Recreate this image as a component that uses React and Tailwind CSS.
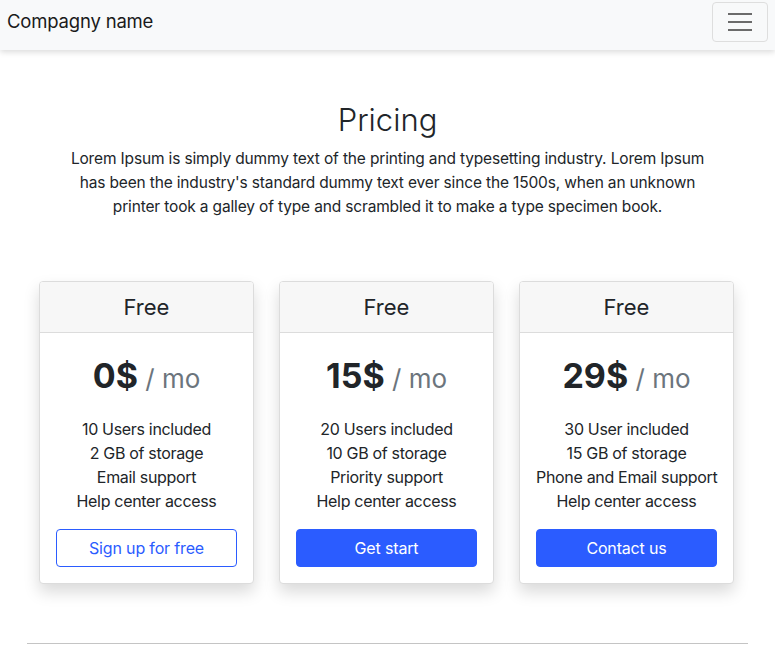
import React from 'react';

const PLANS = [
  {
    title: 'Free',
    price: '0$',
    features: ['10 Users included', '2 GB of storage', 'Email support', 'Help center access'],
    cta: 'Sign up for free',
    outline: true,
  },
  {
    title: 'Free',
    price: '15$',
    features: ['20 Users included', '10 GB of storage', 'Priority support', 'Help center access'],
    cta: 'Get start',
  },
  {
    title: 'Free',
    price: '29$',
    features: ['30 User included', '15 GB of storage', 'Phone and Email support', 'Help center access'],
    cta: 'Contact us',
  },
];

function PlanCard({ plan }) {
  return (
    <div className="w-[215px] rounded-[4px] border border-[#dcdcdc] bg-white shadow-[0_8px_16px_rgba(0,0,0,0.15)] overflow-hidden">
      <div className="h-[51px] flex items-center justify-center bg-[#f7f7f7] border-b border-[#dcdcdc]">
        <h4 className="text-[22px] text-[#212529] leading-none">{plan.title}</h4>
      </div>
      <div className="px-4 pt-[19px] pb-4 text-center">
        <div className="leading-[48px]">
          <span className="text-[34px] font-bold text-[#212529]">{plan.price}</span>
          <span className="text-[26px] text-[#6c757d]"> / mo</span>
        </div>
        <ul className="mt-[11px] text-[16px] leading-6 tracking-[-0.02em] text-[#212529]">
          {plan.features.map((f) => (
            <li key={f} className="whitespace-nowrap">{f}</li>
          ))}
        </ul>
        <button
          className={
            plan.outline
              ? 'mt-4 w-full h-[38px] rounded-[4px] border border-[#2b5cff] text-[#2b5cff] text-[16px] tracking-[-0.01em] bg-white'
              : 'mt-4 w-full h-[38px] rounded-[4px] border border-[#2b5cff] bg-[#2b5cff] text-white text-[16px] tracking-[-0.01em]'
          }
        >
          {plan.cta}
        </button>
      </div>
    </div>
  );
}

export default function App() {
  return (
    <div className="min-h-[653px] bg-white font-['Inter',sans-serif] text-[#212529]">
      {/* Navbar */}
      <nav className="h-[50px] flex items-start justify-between pt-[2px] px-[7px] bg-[#f8f9fa] shadow-[0_2px_6px_rgba(0,0,0,0.15)] relative">
        <span className="h-[40px] flex items-center text-[18.5px] text-[#1a1a1a] tracking-[-0.01em]">Compagny name</span>
        <button className="w-[56px] h-[40px] rounded-[4px] border border-[#dedede] flex flex-col items-center justify-center gap-[6px]">
          <span className="block w-[24px] h-[2px] bg-[#6b6b6b]" />
          <span className="block w-[24px] h-[2px] bg-[#6b6b6b]" />
          <span className="block w-[24px] h-[2px] bg-[#6b6b6b]" />
        </button>
      </nav>

      {/* Heading */}
      <div className="pt-[48px] text-center">
        <h1 className="text-[31px] font-light leading-[44px]">Pricing</h1>
        <p className="mt-[5px] max-w-[660px] mx-auto text-[15.5px] leading-6 tracking-[-0.01em]">
          Lorem Ipsum is simply dummy text of the printing and typesetting industry. Lorem Ipsum has been the industry's standard dummy text ever since the 1500s, when an unknown printer took a galley of type and scrambled it to make a type specimen book.
        </p>
      </div>

      {/* Cards */}
      <div className="mt-[62px] flex justify-center gap-[25px] pr-[2px]">
        {PLANS.map((p, i) => (
          <PlanCard key={i} plan={p} />
        ))}
      </div>

      <hr className="mt-[59px] mx-[27px] border-t-[1.5px] border-[#c4c4c4]" />
    </div>
  );
}
